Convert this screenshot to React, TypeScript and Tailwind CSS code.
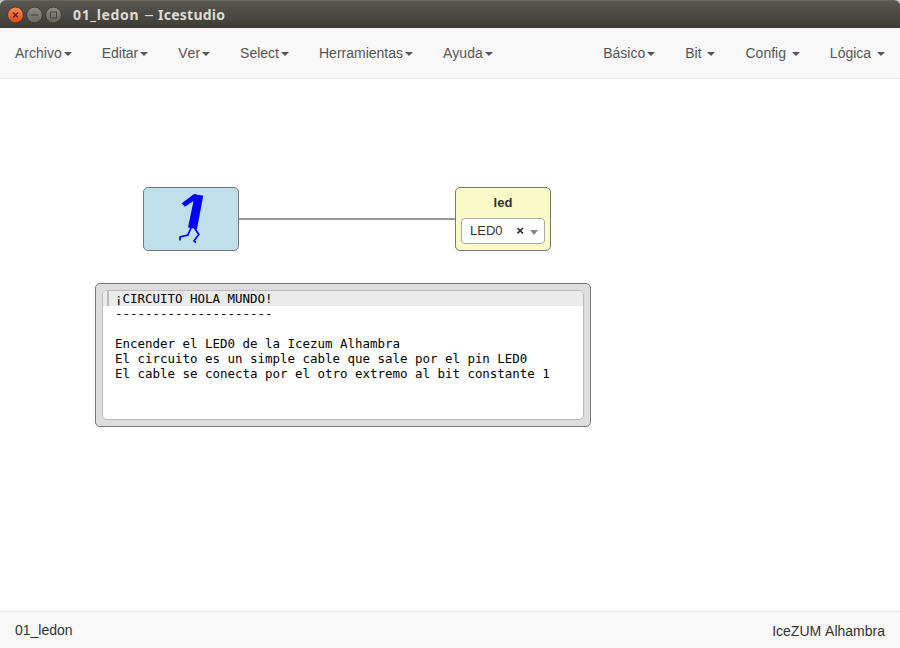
type MenuItem = { label: string; spaced?: boolean };

const leftMenu: MenuItem[] = [
  { label: 'Archivo' },
  { label: 'Editar' },
  { label: 'Ver' },
  { label: 'Select' },
  { label: 'Herramientas' },
  { label: 'Ayuda' },
];

const rightMenu: MenuItem[] = [
  { label: 'Básico' },
  { label: 'Bit', spaced: true },
  { label: 'Config', spaced: true },
  { label: 'Lógica', spaced: true },
];

const noteLines = [
  '¡CIRCUITO HOLA MUNDO!',
  '---------------------',
  '',
  'Encender el LED0 de la Icezum Alhambra',
  'El circuito es un simple cable que sale por el pin LED0',
  'El cable se conecta por el otro extremo al bit constante 1',
];

function TitleBar() {
  return (
    <div className="bg-[#c5c7cc]">
      <header className="flex h-7 items-center rounded-t-[6px] border-t border-[#686660] bg-linear-to-b from-[#595750] to-[#3d3c37] pl-[7px]">
        <svg className="h-[18px] w-[56px] shrink-0" viewBox="0 0 56 18" fill="none">
          <defs>
            <linearGradient id="close" x2="0" y2="1">
              <stop stopColor="#f58b63" />
              <stop offset="1" stopColor="#dd4814" />
            </linearGradient>
            <linearGradient id="grey" x2="0" y2="1">
              <stop stopColor="#908e87" />
              <stop offset="1" stopColor="#65635d" />
            </linearGradient>
          </defs>
          <circle cx="8.5" cy="9" r="7.9" fill="url(#close)" stroke="#3d322e" strokeWidth="0.8" />
          <circle cx="27.5" cy="9" r="7.9" fill="url(#grey)" stroke="#35342f" strokeWidth="0.8" />
          <circle cx="46.5" cy="9" r="7.9" fill="url(#grey)" stroke="#35342f" strokeWidth="0.8" />
          <path d="M6 6.5l5 5m0-5l-5 5" stroke="#5c2413" strokeWidth="1.2" />
          <path d="M24 9h7M43.5 6h6v6h-6z" stroke="#42413c" />
        </svg>
        <h1 className="flex items-center pl-[10px] font-['Noto_Sans','Open_Sans',sans-serif] text-[14px] leading-5 font-bold text-[#dfdbd2]">
          <span className="w-[70px] tracking-[0.65px] whitespace-nowrap">01_ledon</span>
          <span className="w-[15px] origin-left scale-x-[1.35] pl-[1px] font-normal">–</span>
          <span className="tracking-[0.25px] whitespace-nowrap">Icestudio</span>
        </h1>
      </header>
    </div>
  );
}

function Menu({ items }: { items: MenuItem[] }) {
  return (
    <ul className="flex">
      {items.map(({ label, spaced }) => (
        <li key={label} className="flex items-center px-[15px] whitespace-pre">
          <span>{spaced ? label + ' ' : label}</span>
          <span className="mt-px ml-[2px] border-x-4 border-t-4 border-x-transparent border-t-[#555]" />
        </li>
      ))}
    </ul>
  );
}

function ConstantBlock() {
  return (
    <div className="absolute top-[108px] left-[143px] h-16 w-24 rounded-[5px] border border-[#777] bg-[#c0dfeb]">
      <svg className="size-full" viewBox="144 188 94 62" fill="none">
        <path d="M181.5 203.5L194 194L203.2 195.7L197 229L188 227.6L193.5 201L185 206.7Z" fill="#00f" />
        <path
          d="M191 228L187.8 235L180 237V240.5M194.5 228L198.8 234.5L194 240.8L196 242.7"
          stroke="#00f"
          strokeWidth="1.7"
        />
      </svg>
    </div>
  );
}

function LedBlock() {
  return (
    <div className="absolute top-[108px] left-[455px] flex h-16 w-24 flex-col rounded-[5px] border border-[#777] bg-[#fafac8] px-[5px] pt-[5px] text-[13px] text-[#333]">
      <div className="h-[25px] text-center leading-5 font-bold">led</div>
      <div className="flex h-[26px] items-center rounded-[4px] border border-[#aaa] bg-white pl-2">
        <span className="w-[46px] leading-6">LED0</span>
        <svg className="h-3 w-[26px]" viewBox="0 0 26 12">
          <path d="M1.5 3l5.4 5.4m0-5.4l-5.4 5.4" stroke="#333" strokeWidth="1.7" />
          <path d="M14 5h8l-4 5z" fill="#888" />
        </svg>
      </div>
    </div>
  );
}

function NoteBlock() {
  return (
    <div className="absolute top-[204px] left-[95px] h-36 w-[496px] rounded-[5px] border border-[#777] bg-[#ddd] p-[6px]">
      <div className="h-[130px] overflow-hidden rounded-[5px] border border-[#bbb] bg-white font-['DejaVu_Sans_Mono','Liberation_Mono',monospace] text-[12.46px] leading-[15px] text-black">
        {noteLines.map((line, i) =>
          i === 0 ? (
            <div key={i} className="flex h-[15px] bg-[#ebebeb] pl-[4px]">
              <span className="mr-[6px] w-[2px] bg-[#bbb]" />
              <span className="whitespace-pre">{line}</span>
            </div>
          ) : (
            <div key={i} className="h-[15px] pl-[12px] whitespace-pre">
              {line}
            </div>
          ),
        )}
      </div>
    </div>
  );
}

export default function App() {
  return (
    <div className="flex h-screen w-full flex-col overflow-hidden bg-white font-['Liberation_Sans',Arial,sans-serif] text-[14px] leading-5 [font-kerning:none]">
      <TitleBar />
      <nav className="flex h-[51px] shrink-0 justify-between border-b border-[#e7e7e7] bg-[#f8f8f8] text-[#555]">
        <Menu items={leftMenu} />
        <Menu items={rightMenu} />
      </nav>
      <main className="relative flex-1">
        <div className="absolute top-[139px] left-[239px] h-[2px] w-[216px] bg-[#999]" />
        <ConstantBlock />
        <LedBlock />
        <NoteBlock />
      </main>
      <footer className="flex h-[37px] shrink-0 justify-between border-t border-[#e7e7e7] bg-[#f8f8f8] px-[15px] text-[#333]">
        <span className="pt-2">01_ledon</span>
        <span className="pt-[9px]">IceZUM Alhambra</span>
      </footer>
    </div>
  );
}
